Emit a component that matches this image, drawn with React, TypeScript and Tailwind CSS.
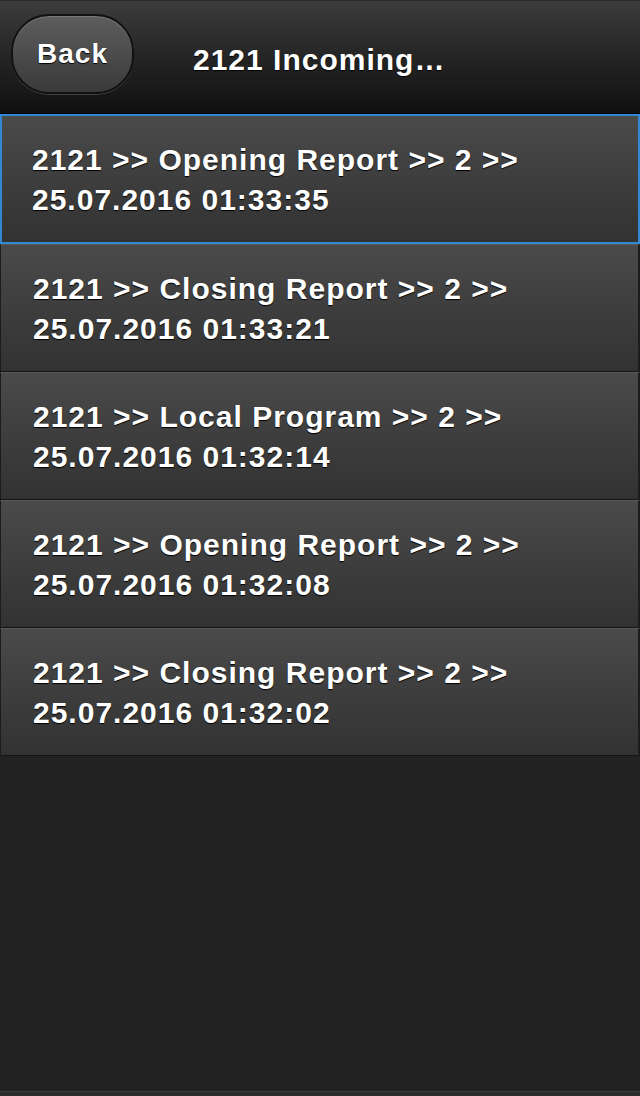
const items = [
  { kind: 'Opening Report', time: '25.07.2016 01:33:35' },
  { kind: 'Closing Report', time: '25.07.2016 01:33:21' },
  { kind: 'Local Program', time: '25.07.2016 01:32:14' },
  { kind: 'Opening Report', time: '25.07.2016 01:32:08' },
  { kind: 'Closing Report', time: '25.07.2016 01:32:02' },
];

export default function App() {
  return (
    <div className="h-[1096px] w-[640px] flex flex-col bg-[#222222] font-['Liberation_Sans',Arial,sans-serif] text-white overflow-hidden">
      <header className="h-[114px] flex items-start bg-gradient-to-b from-[#3c3c3c] to-[#101010] border-t border-[#2a2a2a] border-b border-b-[#000]">
        <button className="ml-[11px] mt-[13px] w-[123px] h-[80px] rounded-[38px] border-2 border-[#111] bg-gradient-to-b from-[#5e5e5e] to-[#3a3a3a] shadow-[inset_0_1px_0_#7a7a7a,0_1px_0_#444] text-[28px] tracking-[1px] font-bold [text-shadow:0_1px_1px_#000] leading-none">
          Back
        </button>
        <h1 className="ml-[59px] mt-[42px] text-[30px] leading-[34px] tracking-[1px] font-bold [text-shadow:0_1px_1px_#000]">2121 Incoming…</h1>
      </header>
      <ul className="flex flex-col">
        {items.map((it, i) => (
          <li
            key={i}
            className={`flex flex-col justify-center pt-[2px] text-[30px] tracking-[1px] font-bold leading-[40px] [text-shadow:0_1px_1px_#000] bg-gradient-to-b from-[#4a4a4a] to-[#323232] ${
              i === 0
                ? 'h-[130px] border-2 border-[#3388d4] pl-[30px]'
                : 'h-[128px] pl-[32px] border-l border-r-2 border-l-[#1c1c1c] border-r-[#1c1c1c] border-b border-b-[#151515] border-t border-t-[#5a5a5a]'
            }`}
          >
            <span>2121 &gt;&gt; {it.kind} &gt;&gt; 2 &gt;&gt;</span>
            <span>{it.time}</span>
          </li>
        ))}
      </ul>
      <div className="flex-1" />
      <div className="h-[5px] bg-[#2c2c2c] border-t border-[#3a3a3a]" />
    </div>
  );
}
